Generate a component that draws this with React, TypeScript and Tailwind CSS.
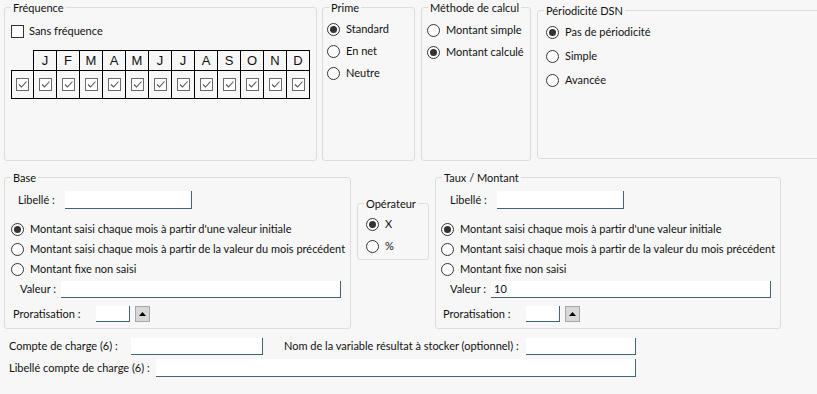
import React from "react";

const months = ["J", "F", "M", "A", "M", "J", "J", "A", "S", "O", "N", "D"];

// Cadre de groupe façon Windows
const Group = ({
  title,
  className,
  legendClass = "ml-[6px]",
  children,
}: {
  title: string;
  className: string;
  legendClass?: string;
  children?: React.ReactNode;
}) => (
  <fieldset
    className={`border border-[#dcdcdc] rounded-[3px] min-w-0 shrink-0 ${className}`}
  >
    <legend className={`px-[2px] leading-[15px] whitespace-nowrap ${legendClass}`}>{title}</legend>
    {children}
  </fieldset>
);

const Radio = ({ label, checked = false }: { label: string; checked?: boolean }) => (
  <div className="flex items-center h-full">
    <span className="w-[13px] h-[13px] rounded-full border border-[#333333] bg-white flex items-center justify-center shrink-0">
      {checked && <span className="w-[7px] h-[7px] rounded-full bg-[#333333]" />}
    </span>
    <span className="ml-[6px] whitespace-nowrap">{label}</span>
  </div>
);

const TextBox = ({ className, value }: { className: string; value?: string }) => (
  <div
    className={`bg-white border-b border-r border-[#3f6476] shrink-0 flex items-center pl-[3px] ${className}`}
  >
    {value}
  </div>
);

const SpinUp = () => (
  <div className="w-[15px] h-[16px] ml-[5px] bg-[#d8d8d8] border border-[#a8a8a8] flex items-center justify-center shrink-0">
    <svg width="7" height="4" viewBox="0 0 7 4">
      <path d="M0 4 L3.5 0 L7 4 Z" fill="#000" />
    </svg>
  </div>
);

const MonthCheck = () => (
  <span className="w-[13px] h-[13px] border border-[#6b6b6b] bg-white flex items-center justify-center">
    <svg width="11" height="11" viewBox="0 0 11 11">
      <path d="M2 5.5 L4.5 8 L9.5 2.5" fill="none" stroke="#555" strokeWidth="1.1" />
    </svg>
  </span>
);

const MontantBlock = ({
  libelleMl,
  radioMl,
  valeurMl,
  proMl,
  valeur,
}: {
  libelleMl: string;
  radioMl: string;
  valeurMl: string;
  proMl: string;
  valeur?: string;
}) => (
  <>
    <div className={`flex items-center mt-[6px] h-[18px] ${libelleMl}`}>
      <span className="w-[47px] shrink-0 whitespace-nowrap">Libellé :</span>
      <TextBox className="w-[127px] h-[18px]" />
    </div>
    <div className={`mt-[10px] ${radioMl}`}>
      <div className="h-[20px]">
        <Radio label="Montant saisi chaque mois à partir d'une valeur initiale" checked />
      </div>
      <div className="h-[20px]">
        <Radio label="Montant saisi chaque mois à partir de la valeur du mois précédent" />
      </div>
      <div className="h-[20px]">
        <Radio label="Montant fixe non saisi" />
      </div>
    </div>
    <div className={`flex items-center mt-[2px] h-[17px] ${valeurMl}`}>
      <span className="w-[41px] shrink-0 whitespace-nowrap">Valeur :</span>
      <TextBox className="w-[280px] h-[17px]" value={valeur} />
    </div>
    <div className={`flex items-center mt-[8px] h-[16px] ${proMl}`}>
      <span className="w-[83px] shrink-0 whitespace-nowrap">Proratisation :</span>
      <TextBox className="w-[34px] h-[16px]" />
      <SpinUp />
    </div>
  </>
);

export default function App() {
  return (
    <div className="w-[817px] h-[394px] overflow-hidden bg-[#f7f7f7] text-[11px] text-[#111] font-['Lato',sans-serif]">
      {/* Ligne du haut */}
      <div className="flex items-start pl-[4px] h-[161px]">
        <Group title="Fréquence" className="w-[313px] h-[161px]">
          <div className="flex items-center mt-[8px] ml-[6px] h-[16px]">
            <span className="w-[13px] h-[13px] border border-[#333333] bg-white" />
            <span className="ml-[5px]">Sans fréquence</span>
          </div>
          <div className="flex mt-[11px] ml-[6px] font-['Liberation_Sans',sans-serif] text-[13px]">
            {["", ...months].map((m, i) => (
              <div key={i} className={`flex flex-col ${i === 0 ? "w-[22px]" : "w-[23px]"}`}>
                <div
                  className={`h-[20px] flex items-center justify-center ${
                    i === 0 ? "" : "border-t border-l border-black"
                  } ${i === 12 ? "border-r w-[24px]" : ""}`}
                >
                  {m}
                </div>
                <div
                  className={`h-[29px] border-t border-l border-b border-black flex items-center justify-center ${
                    i === 12 ? "border-r w-[24px]" : ""
                  }`}
                >
                  <MonthCheck />
                </div>
              </div>
            ))}
          </div>
        </Group>

        <Group title="Prime" className="ml-[5px] w-[93px] h-[161px]">
          <div className="ml-[4px] mt-[3px]">
            <div className="h-[22px]">
              <Radio label="Standard" checked />
            </div>
            <div className="h-[22px]">
              <Radio label="En net" />
            </div>
            <div className="h-[22px]">
              <Radio label="Neutre" />
            </div>
          </div>
        </Group>

        <Group title="Méthode de calcul" className="ml-[6px] w-[110px] h-[161px]">
          <div className="ml-[5px] mt-[4px]">
            <div className="h-[22px]">
              <Radio label="Montant simple" />
            </div>
            <div className="h-[22px]">
              <Radio label="Montant calculé" checked />
            </div>
          </div>
        </Group>

        <Group title="Périodicité DSN" className="ml-[6px] mt-[3px] w-[300px] h-[156px]">
          <div className="ml-[8px] mt-[2px]">
            <div className="h-[24px]">
              <Radio label="Pas de périodicité" checked />
            </div>
            <div className="h-[24px]">
              <Radio label="Simple" />
            </div>
            <div className="h-[24px]">
              <Radio label="Avancée" />
            </div>
          </div>
        </Group>
      </div>

      {/* Ligne du milieu */}
      <div className="flex items-start pl-[4px] mt-[9px]">
        <Group title="Base" className="w-[347px] h-[159px]">
          <MontantBlock libelleMl="ml-[13px]" radioMl="ml-[6px]" valeurMl="ml-[15px]" proMl="ml-[8px]" />
        </Group>

        <Group title="Opérateur" className="ml-[6px] mt-[26px] w-[72px] h-[64px]">
          <div className="ml-[8px] mt-[2px]">
            <div className="h-[22px]">
              <Radio label="X" checked />
            </div>
            <div className="h-[22px]">
              <Radio label="%" />
            </div>
          </div>
        </Group>

        <Group title="Taux / Montant" className="ml-[6px] w-[346px] h-[159px]">
          <MontantBlock
            libelleMl="ml-[14px]"
            radioMl="ml-[5px]"
            valeurMl="ml-[14px]"
            proMl="ml-[7px]"
            valeur="10"
          />
        </Group>
      </div>

      {/* Bas */}
      <div className="flex items-center mt-[9px] h-[17px] pl-[9px]">
        <span className="w-[122px] shrink-0 whitespace-nowrap">Compte de charge (6) :</span>
        <TextBox className="w-[132px] h-[17px]" />
        <span className="ml-[21px] w-[242px] shrink-0 whitespace-nowrap">
          Nom de la variable résultat à stocker (optionnel) :
        </span>
        <TextBox className="w-[110px] h-[17px]" />
      </div>
      <div className="flex items-center mt-[4px] h-[18px] pl-[9px]">
        <span className="w-[147px] shrink-0 whitespace-nowrap">Libellé compte de charge (6) :</span>
        <TextBox className="w-[480px] h-[18px]" />
      </div>
    </div>
  );
}
